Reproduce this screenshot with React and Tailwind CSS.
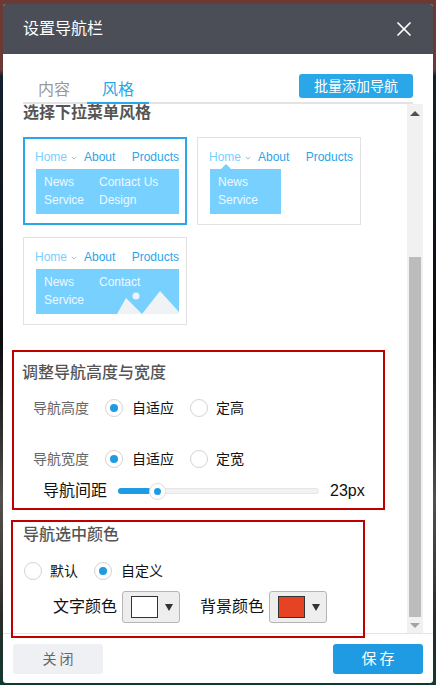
import { X } from 'lucide-react';

const font = { fontFamily: '"Liberation Sans", "Noto Sans CJK SC", sans-serif' };

function Radio({ on }) {
  return (
    <span className="flex h-[18px] w-[18px] shrink-0 items-center justify-center rounded-full border border-[#d4d4d4] bg-white">
      {on && <span className="h-2 w-2 rounded-full bg-[#1f9be3]" />}
    </span>
  );
}

function Swatch({ color }) {
  return (
    <span className="flex h-[32px] w-[58px] items-center rounded-[3px] border border-[#b5b5b5] bg-[#eeeeee] pl-[8px]">
      <span className={`h-[22px] w-[27px] border border-[#333] ${color}`} />
      <span className="ml-[7px] h-0 w-0 border-x-[4px] border-t-[7px] border-x-transparent border-t-[#333]" />
    </span>
  );
}

function Preview({ selected, children, items, narrow }) {
  return (
    <div className={`h-[88px] w-[164px] bg-white ${selected ? 'border-2 border-[#29a7e8] pl-[11px] pt-[8px]' : 'border border-[#e2e2e2] pl-[12px] pt-[9px]'}`}>
      <div className="-ml-px flex h-[20px] w-[144px] items-center text-[12px] text-[#2aa5ea]">
        <span className="flex w-[49px] items-center text-[#78d0ff]">
          Home
          <svg viewBox="0 0 8 5" className="ml-[4px] mt-[2px] h-[4px] w-[6px]" fill="none" stroke="#78a9c9">
            <path d="M1 1l3 3 3-3" />
          </svg>
        </span>
        <span>About</span>
        <span className="ml-auto">Products</span>
      </div>
      <div className={`relative mt-[2px] h-[45px] bg-[#78d0ff] text-[12px] leading-[18px] text-[#eef8ff] ${narrow ? 'w-[71px]' : 'w-[143px]'}`}>
        {children}
        <div className="relative flex pl-[8px] pt-[4px]">
          <div className="w-[55px]">
            <div>News</div>
            <div>Service</div>
          </div>
          {items && (
            <div>
              {items.map(item => (
                <div key={item}>{item}</div>
              ))}
            </div>
          )}
        </div>
      </div>
    </div>
  );
}

export default function App() {
  return (
    <div className="h-[685px] w-[436px] overflow-hidden bg-[linear-gradient(#6b3a36_0px,#6b3a36_70px,#14202e_76px,#0c0c0e_340px,#2a2a2a_420px,#55504c_500px,#2b2b25_620px,#0f3a32_685px)] pt-[4px]" style={font}>
      <div className="mx-[3px] h-[679px] overflow-hidden rounded-[3px] bg-white">
        <div className="flex h-[50px] items-center justify-between bg-[#4b4e57] pl-[20px] pr-[17px] text-white">
          <span className="text-[16px]">设置导航栏</span>
          <X size={24} strokeWidth={1.75} />
        </div>
        <div className="mx-[20px] mt-[20px] flex h-[30px] items-start justify-between border-b-2 border-[#e3e3e3]">
          <div className="flex text-[16px]">
            <span className="w-[64px] pl-[15px] pt-[4px] text-[#999]">内容</span>
            <span className="-mb-[2px] h-[30px] w-[62px] border-b-2 border-[#29a7e8] pt-[4px] text-center text-[#29a7e8]">风格</span>
          </div>
          <button className="h-[24px] w-[114px] rounded-[3px] bg-[#29a7e8] text-[14px] text-white">批量添加导航</button>
        </div>
        <div className="flex h-[529px]">
          <div className="w-[404px] shrink-0">
            <h3 className="pl-[20px] text-[16px] font-bold leading-[18px] text-[#555]">选择下拉菜单风格</h3>
            <div className="ml-[20px] mt-[15px] flex w-[340px] flex-wrap gap-x-[10px] gap-y-[12px]">
              <Preview selected items={['Contact Us', 'Design']} />
              <Preview narrow>
                <span className="absolute -top-[5px] left-[11px] h-0 w-0 border-x-[5px] border-b-[5px] border-x-transparent border-b-[#78d0ff]" />
              </Preview>
              <Preview items={['Contact']}>
                <svg viewBox="0 0 62 40" className="absolute bottom-0 right-0 h-[40px] w-[62px]">
                  <path d="M0 40L9 24l16 16L43 17l19 21v2z" fill="#eff3f6" />
                  <circle cx="19" cy="22" r="3.5" fill="#eff3f6" />
                </svg>
              </Preview>
            </div>
            <div className="ml-[9px] mt-[25px] h-[160px] w-[373px] border-2 border-[#c00000] pl-[8px] pt-[10px]">
              <h3 className="text-[16px] font-medium leading-[22px] text-[#555]">调整导航高度与宽度</h3>
              <div className="mt-[14px] flex h-[20px] items-center text-[14px] text-[#111]">
                <span className="w-[83px] pl-[11px] text-[#666]">导航高度</span>
                <Radio on />
                <span className="ml-[9px] w-[42px] whitespace-nowrap">自适应</span>
                <span className="ml-[16px]"><Radio /></span>
                <span className="ml-[8px]">定高</span>
              </div>
              <div className="mt-[31px] flex h-[20px] items-center text-[14px] text-[#111]">
                <span className="w-[83px] pl-[11px] text-[#666]">导航宽度</span>
                <Radio on />
                <span className="ml-[9px] w-[42px] whitespace-nowrap">自适应</span>
                <span className="ml-[16px]"><Radio /></span>
                <span className="ml-[8px]">定宽</span>
              </div>
              <div className="mt-[11px] flex h-[22px] items-center">
                <span className="w-[96px] whitespace-nowrap pl-[21px] text-[16px] text-[#111]">导航间距</span>
                <div className="relative h-[6px] w-[201px] rounded-full border border-[#e6e6e6] bg-[#f2f2f2]">
                  <div className="-m-px h-[6px] w-[33px] rounded-full bg-[#1f9be3]" />
                  <span className="absolute -top-[6px] left-[30px] flex h-[17px] w-[17px] items-center justify-center rounded-full border border-[#ddd] bg-white">
                    <span className="h-[7px] w-[7px] rounded-full bg-[#1f9be3]" />
                  </span>
                </div>
                <span className="ml-[11px] text-[16px] text-[#111]">23px</span>
              </div>
            </div>
            <div className="ml-[8px] mt-[10px] h-[118px] w-[354px] border-2 border-[#c00000] pl-[10px] pt-[1px]">
              <h3 className="text-[16px] font-medium leading-[24px] text-[#555]">导航选中颜色</h3>
              <div className="ml-[1px] mt-[14px] flex h-[20px] items-center text-[14px] text-[#111]">
                <Radio />
                <span className="ml-[8px] w-[28px]">默认</span>
                <span className="ml-[16px]"><Radio on /></span>
                <span className="ml-[9px]">自定义</span>
              </div>
              <div className="mt-[10px] flex items-center text-[16px] text-[#111]">
                <span className="ml-[30px] w-[69px] whitespace-nowrap">文字颜色</span>
                <Swatch color="bg-white" />
                <span className="ml-[20px] w-[69px] whitespace-nowrap">背景颜色</span>
                <Swatch color="bg-[#e64322]" />
              </div>
            </div>
          </div>
          <div className="flex w-[16px] shrink-0 flex-col bg-[#f1f1f1]">
            <div className="flex h-[18px] items-center justify-center">
              <span className="h-0 w-0 border-x-[5px] border-b-[5px] border-x-transparent border-b-[#505050]" />
            </div>
            <div className="mx-[2px] mt-[135px] flex-1 bg-[#bcbcbc]" />
            <div className="flex h-[16px] items-center justify-center">
              <span className="h-0 w-0 border-x-[5px] border-t-[5px] border-x-transparent border-t-[#a3a3a3]" />
            </div>
          </div>
        </div>
        <div className="flex items-center justify-between border-t border-[#e5e5e5] px-[10px] pt-[10px]">
          <button className="h-[30px] w-[90px] rounded-[3px] bg-[#eef0f3] pl-[3px] text-[14px] tracking-[3px] text-[#666]">关闭</button>
          <button className="h-[30px] w-[90px] rounded-[3px] bg-[#1f9be3] pl-[3px] text-[15px] tracking-[3px] text-white">保存</button>
        </div>
      </div>
    </div>
  );
}
